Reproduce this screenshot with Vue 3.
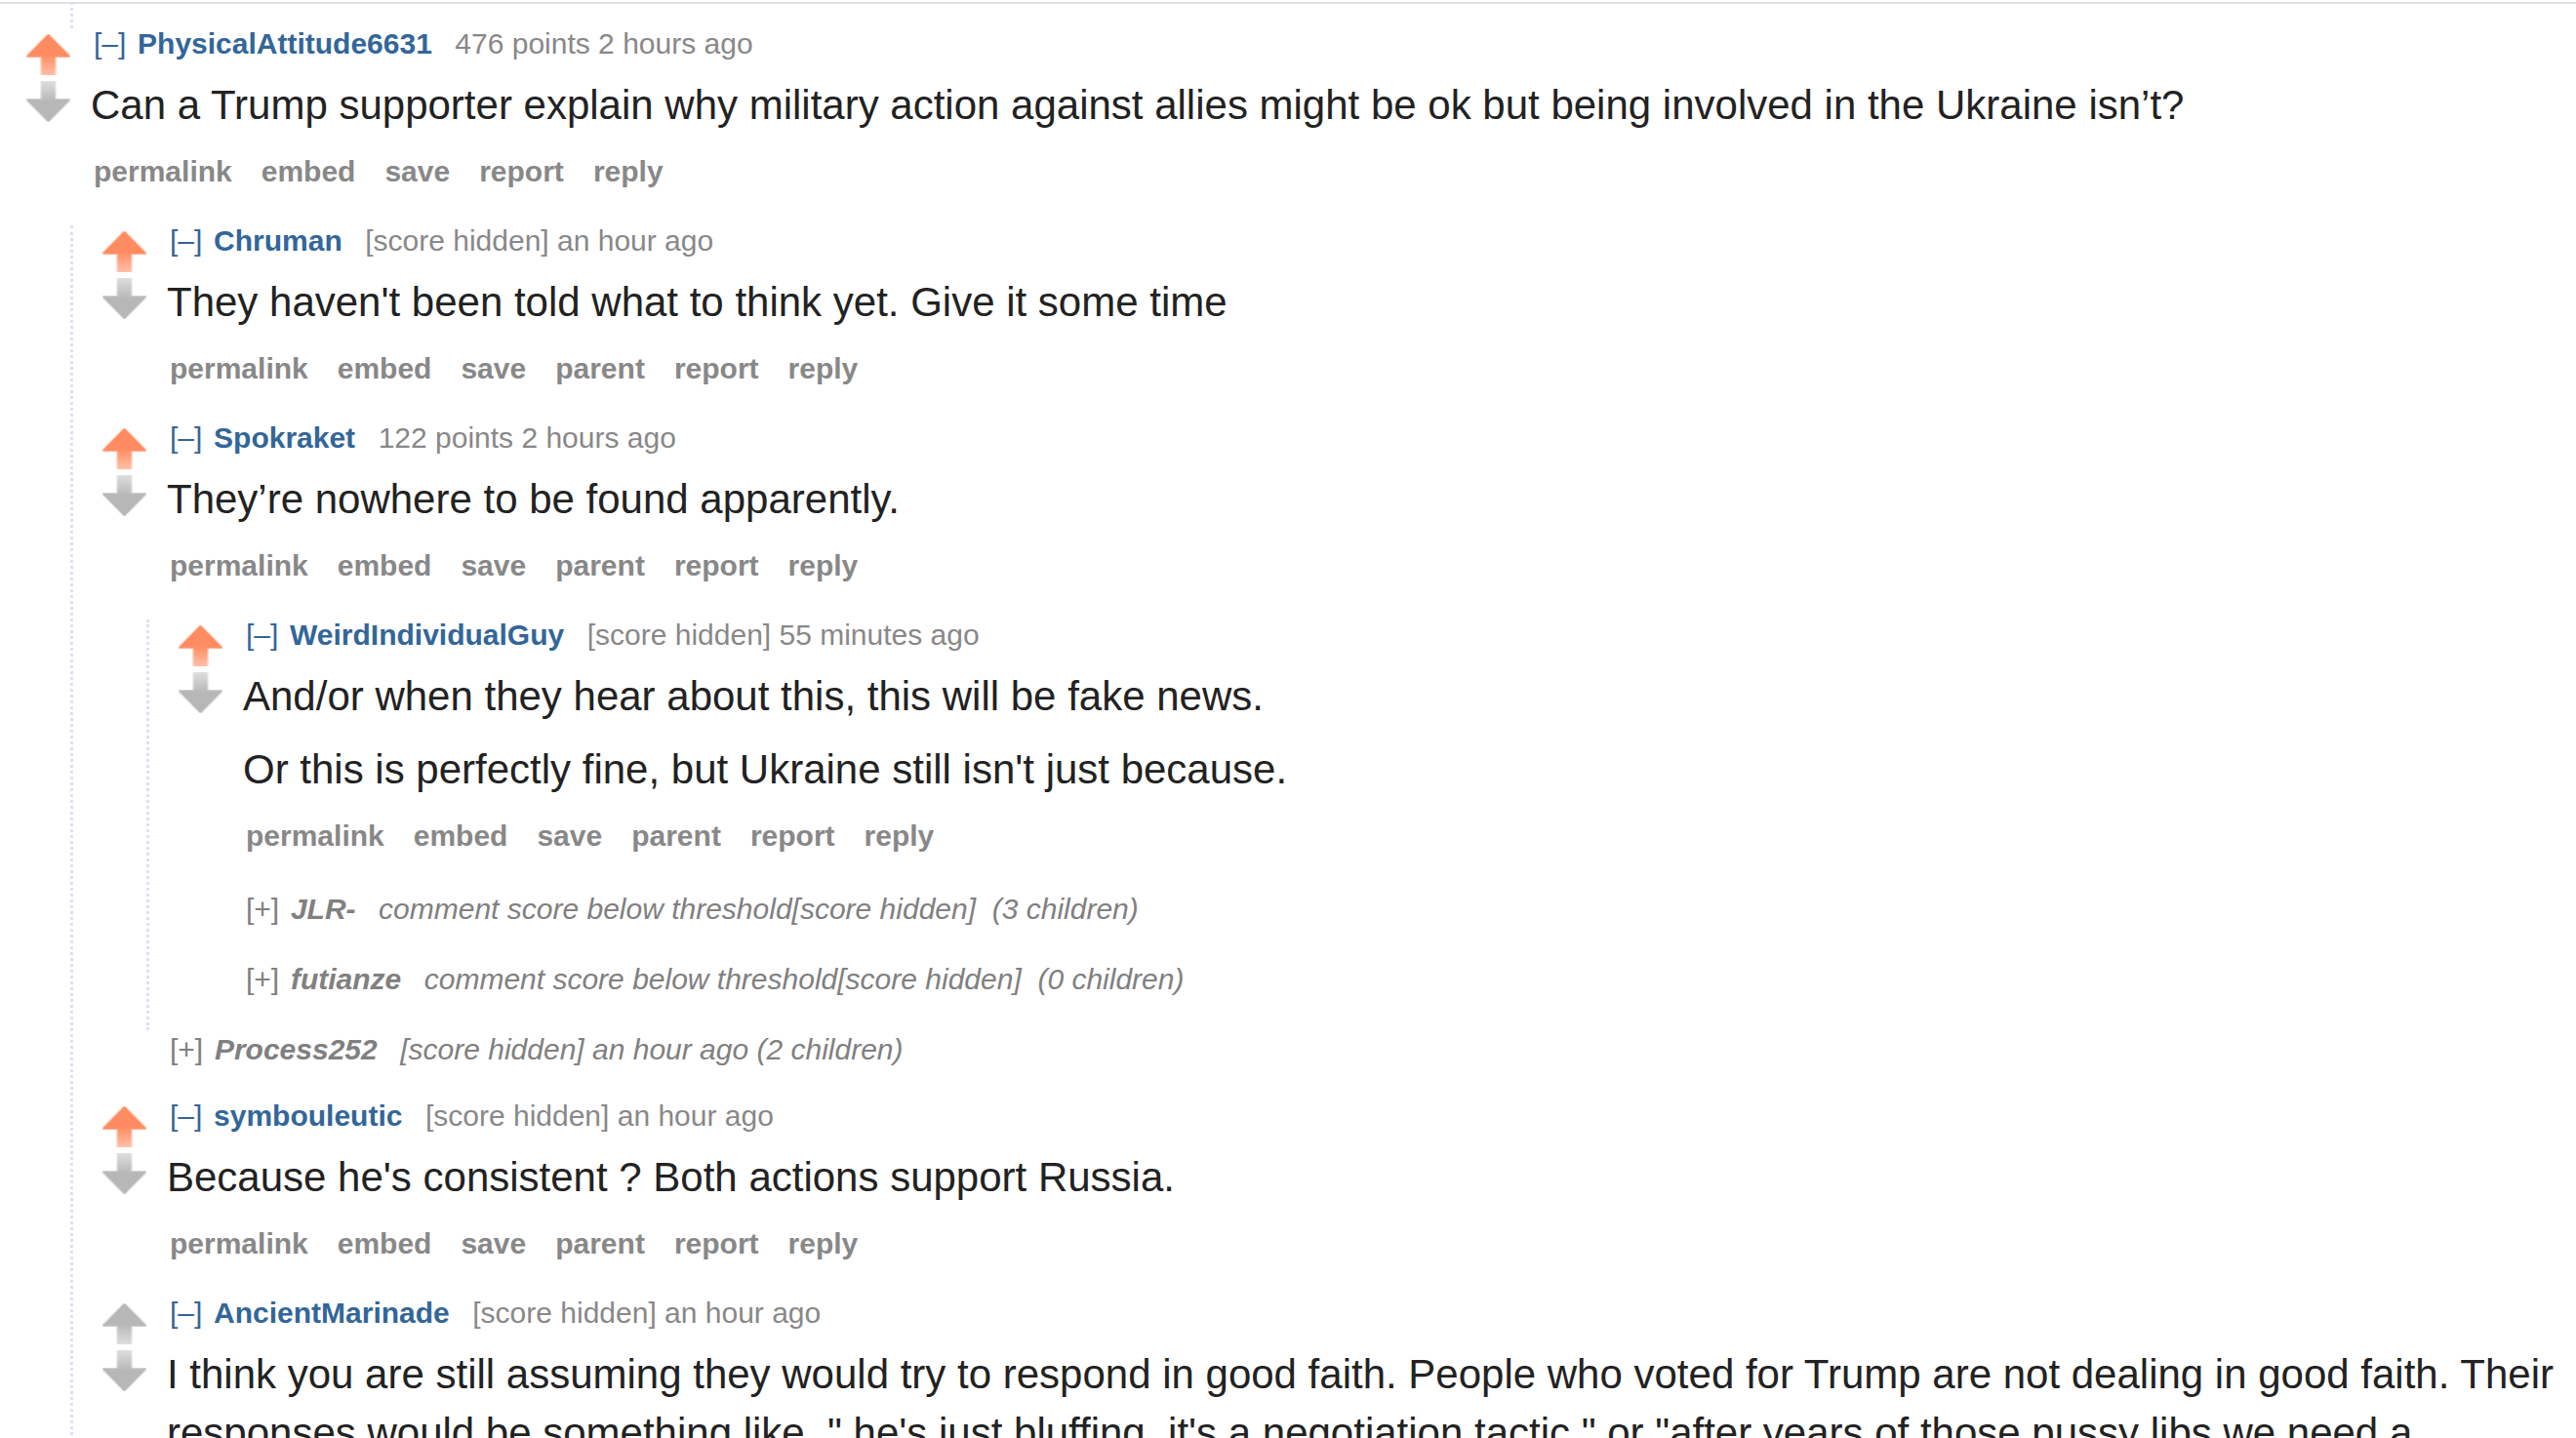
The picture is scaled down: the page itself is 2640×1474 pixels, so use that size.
<template>
  <main class="thread">
    <div class="previous"></div>

    <template v-for="block in blocks" :key="block.id">
      <section class="children" :class="'depth-' + block.depth">
        <div v-for="group in block.groups" :key="group.id" :class="{ children: group.nested, nested: group.nested }">
          <article
            v-for="comment in group.comments"
            :key="comment.author"
            class="comment"
            :class="{ collapsed: comment.collapsed }"
          >
            <div v-if="!comment.collapsed" class="votes">
              <svg
                v-for="direction in ['up', 'down']"
                :key="direction"
                class="arrow"
                :class="direction"
                viewBox="0 0 45 42"
                :fill="direction === 'up' && comment.upvoted ? 'url(#orange)' : 'url(#gray)'"
              >
                <path opacity="0.4" d="M21 0H24L45 21V24H31V42H14V24H0V21z"/>
                <path d="M22 0.5H23L44.5 22.5V23.5H29.5V42H15.5V23.5H0.5V22.5z"/>
              </svg>
            </div>
            <div class="entry">
              <p class="tagline">
                <a class="expand">{{ comment.collapsed ? '[+]' : '[–]' }}</a>
                <a class="author">{{ comment.author }}</a>
                <span class="meta">{{ comment.meta }}</span>
              </p>
              <template v-if="!comment.collapsed">
                <div class="body">
                  <p v-for="text in comment.body" :key="text">{{ text }}</p>
                </div>
                <ul class="buttons">
                  <li v-for="action in comment.root ? rootActions : actions" :key="action">{{ action }}</li>
                </ul>
              </template>
            </div>
          </article>
        </div>
      </section>
    </template>

    <!-- Shared arrow gradients -->
    <svg class="defs">
      <defs>
        <linearGradient id="orange" gradientUnits="userSpaceOnUse" x1="0" y1="0" x2="0" y2="42">
          <stop offset="0.5" stop-color="#ff8b60"/>
          <stop offset="1" stop-color="#ffc0a8"/>
        </linearGradient>
        <linearGradient id="gray" gradientUnits="userSpaceOnUse" x1="0" y1="0" x2="0" y2="42">
          <stop offset="0.5" stop-color="#b7b7b7"/>
          <stop offset="1" stop-color="#dedede"/>
        </linearGradient>
      </defs>
    </svg>
  </main>
</template>

<script setup>
const rootActions = ['permalink', 'embed', 'save', 'report', 'reply'];
const actions = ['permalink', 'embed', 'save', 'parent', 'report', 'reply'];

const blocks = [
  {
    id: 'root',
    depth: 0,
    groups: [
      {
        id: 'top',
        comments: [
          {
            author: 'PhysicalAttitude6631',
            meta: '476 points 2 hours ago',
            root: true,
            upvoted: true,
            body: ['Can a Trump supporter explain why military action against allies might be ok but being involved in the Ukraine isn’t?'],
          },
        ],
      },
    ],
  },
  {
    id: 'replies',
    depth: 1,
    groups: [
      {
        id: 'first',
        comments: [
          {
            author: 'Chruman',
            meta: '[score hidden] an hour ago',
            upvoted: true,
            body: ["They haven't been told what to think yet. Give it some time"],
          },
          {
            author: 'Spokraket',
            meta: '122 points 2 hours ago',
            upvoted: true,
            body: ['They’re nowhere to be found apparently.'],
          },
        ],
      },
      {
        id: 'spokraket-replies',
        nested: true,
        comments: [
          {
            author: 'WeirdIndividualGuy',
            meta: '[score hidden] 55 minutes ago',
            upvoted: true,
            body: [
              'And/or when they hear about this, this will be fake news.',
              "Or this is perfectly fine, but Ukraine still isn't just because.",
            ],
          },
          {
            author: 'JLR-',
            meta: 'comment score below threshold[score hidden]\u00a0 (3 children)',
            collapsed: true,
          },
          {
            author: 'futianze',
            meta: 'comment score below threshold[score hidden]\u00a0 (0 children)',
            collapsed: true,
          },
        ],
      },
      {
        id: 'rest',
        comments: [
          {
            author: 'Process252',
            meta: '[score hidden] an hour ago (2 children)',
            collapsed: true,
          },
          {
            author: 'symbouleutic',
            meta: '[score hidden] an hour ago',
            upvoted: true,
            body: ["Because he's consistent ? Both actions support Russia."],
          },
          {
            author: 'AncientMarinade',
            meta: '[score hidden] an hour ago',
            body: [
              'I think you are still assuming they would try to respond in good faith. People who voted for Trump are not dealing in good faith. Their responses would be something like, " he\'s just bluffing, it\'s a negotiation tactic," or "after years of those pussy libs we need a',
            ],
          },
        ],
      },
    ],
  },
];
</script>

<style>
body {
  margin: 0;
  background: #fff;
}
</style>

<style scoped>
.thread {
  height: 1474px;
  box-sizing: border-box;
  padding-top: 2px;
  overflow: hidden;
  position: relative;
  background: #fff;
  color: #222;
  font-family: "Liberation Sans", Arial, sans-serif;
  font-size: 30px;
}

/* Rule above the thread, drawn over the previous comment's border */
.thread::before {
  content: "";
  position: absolute;
  top: 2px;
  left: 0;
  right: 0;
  height: 2px;
  background: #e0e0e0;
}

.previous {
  height: 27px;
  margin-left: 72px;
  border-left: 3px dotted #ddf;
}

.depth-0 {
  padding-left: 27px;
}

.depth-1,
.nested {
  border-left: 3px dotted #ddf;
  padding-left: 30px;
}

.depth-1 {
  margin-left: 72px;
}

.nested {
  margin-left: 45px;
}

.comment {
  display: flex;
  align-items: flex-start;
}

.votes {
  width: 45px;
  padding-top: 6px;
  margin-right: 21px;
  display: flex;
  flex-direction: column;
  gap: 6px;
  flex-shrink: 0;
}

.arrow {
  display: block;
  width: 45px;
  height: 42px;
}

.arrow.down {
  transform: scaleY(-1);
}

.entry {
  flex: 1;
  min-width: 0;
}

.tagline {
  display: flex;
  margin: 0;
  padding-left: 3px;
  line-height: 32px;
  white-space: pre;
}

.expand {
  color: #369;
  margin-right: 11.7px;
}

.author {
  color: #369;
  font-weight: bold;
  margin-right: 23.5px;
}

.meta {
  color: #888;
}

.body {
  padding-top: 17px;
  font-size: 42px;
  line-height: 60px;
}

.body p {
  margin: 0 0 15px;
}

.buttons {
  display: flex;
  gap: 30px;
  margin: 0;
  padding: 7px 0 39px 3px;
  list-style: none;
  color: #888;
  font-weight: bold;
  line-height: 32px;
}

.collapsed .entry {
  padding: 4px 0 36px 66px;
}

.collapsed .tagline a,
.collapsed .meta {
  color: #808080;
}

.collapsed .author,
.collapsed .meta {
  font-style: italic;
}

.defs {
  position: absolute;
  width: 0;
  height: 0;
}
</style>
